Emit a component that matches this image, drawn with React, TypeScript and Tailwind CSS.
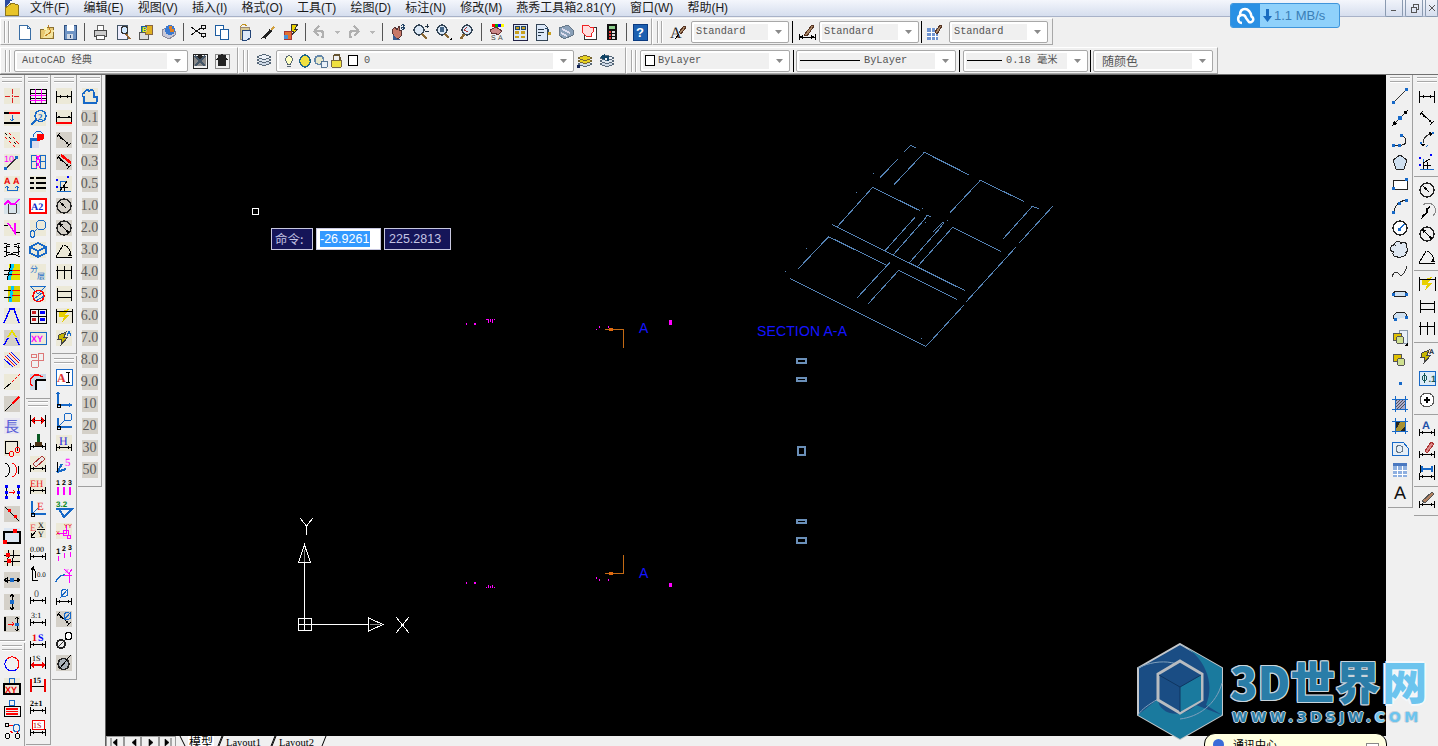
import React from 'react';

type Txt = { x: number; y: number; s: number; c: string; t: string; b?: boolean; f?: string };
type It = string | Txt;
const T = (x: number, y: number, s: number, c: string, t: string, b = false, f = 'Liberation Sans'): Txt => ({ x, y, s, c, t, b, f });
const R = '#f00', B = '#00f', M = '#f0f', K = '#000', U = '#1769c8', SE = 'Liberation Serif';
const D = ['#000|M.5 3V15M15.5 3V15M.5 8.5H15.5', '*#000|M1 8.5L5 7V10ZM15 8.5L11 7V10Z'];
const DL = ['#000|M.5 9V16M15.5 9V16M.5 12.5H15.5', '*#000|M1 12.5L4 11V14ZM15 12.5L12 11V14Z'];
const AL = ['#000|M4 1L1 5M15 11L11 15M2.5 3L13 13', '*#000|M2.5 3L6 5L4.5 6.5ZM13 13L9.5 11L11 9.5Z'];

function Ic({ d, size = 16 }: { d: It[]; size?: number }) {
  return (
    <svg width={size} height={size} viewBox="0 0 16 16" shapeRendering="crispEdges" className="overflow-visible shrink-0">
      {d.map((it, i) => {
        if (typeof it !== 'string')
          return <text key={i} x={it.x} y={it.y} fontSize={it.s} fill={it.c} fontWeight={it.b ? 700 : 400} fontFamily={it.f} textRendering="geometricPrecision">{it.t}</text>;
        const [c, p, w] = it.split('|');
        return c[0] === '*'
          ? <path key={i} d={p} fill={c.slice(1)} />
          : <path key={i} d={p} fill="none" stroke={c} strokeWidth={w || 1} />;
      })}
    </svg>
  );
}

const tile = (c: string): string => `*${c}|M0 0H16V16H0Z`;
const BG = tile('#ece9d8'), GR = tile('#d4d0c8');

const col1: It[][] = [
  [BG, '#d22|M8 1V6M8 7V9M8 10V15M1 8H6M10 8H15'],
  [BG, '#000|M0 2.5H16M0 12.5H16|2', '#f00|M5 2.5H16|2', `${U}|M8 5V11M6 9L8 11L10 9`],
  [BG, '#000|M1 1L3 3M5 5L7 7M10 10L12 12', '#f00|M5 1L7 3M9 5L11 7M12 9L15 12M1 5L3 7M5 9L7 11M9 13L11 15'],
  [BG, T(0, 8, 9, M, '10'), '#333|M2 15L12 4|1.5', `*${U}|M0 13H3V16H0ZM11 2H14V5H11Z`],
  [BG, T(0, 8, 9, '#e00', 'A', true), T(9, 8, 9, '#e00', 'A', true), `${U}|M3 10V14H13V10M1 12L3 10L5 12M11 12L13 10L15 12`],
  [tile('#d7e3ea'), '#444|M4 6V15M12 6V15M4 15H12', `${M}|M0 7L4 3L7 6L11 6L15 1|1.5`],
  [BG, '#000|M0 5H4M12 12H16', `${M}|M4 3L11 13V3|1.5`],
  ['#000|M0 1C6 4 10 4 16 1M0 6C6 3 10 3 16 6M0 15C6 11 10 11 16 15M0 9.5C6 12 10 12 16 9.5M2 3V13M14 3V13'],
  [tile('#e6e000'), '*#eee|M0 0H5V16H0Z', '#00c8ff|M9 0L5 16|3', '#000|M0 6H8M0 10H8M7 0L3 16', `${R}|M8 6H16M8 10H16`],
  [tile('#d8d000'), '*#eee|M0 0H4V16H0Z', '#00c8ff|M9 0L6 16|3', '#000|M0 4H7M0 11H7', `${R}|M8 4H16M8 9H16`],
  [BG, `${B}|M0 15L6 1L10 1L15 15|1.5`],
  [tile('#d4d0c8'), `${B}|M0 15L4 8M12 8L15 15|1.5`, '#e8e000|M4 7L8 1L12 7|1.5'],
  [BG, `${B}|M0 7L9 15M3 3L13 13M7 0L16 9`, `${R}|M1 4L11 14M5 1L15 11`],
  [BG, '#000|M0 15L7 9', '#f00|M8 8L10 6M11 5L13 3M14 2L16 0'],
  [GR, '#000|M1 15L8 8', `${R}|M8 8L15 1|1.5`],
  [tile('#e8e6f0'), T(0, 14, 15, '#5a5fd8', '長', false, 'Noto Sans CJK TC')],
  [BG, '#000|M1 1H13V11M1 1V13H5', `${R}|M5 14A2.5 2.5 0 1 0 10 14A2.5 2.5 0 1 0 5 14ZM11 10A2.5 2.5 0 1 0 16 10A2.5 2.5 0 1 0 11 10Z`],
  ['#000|M1 1C7 3 7 13 1 15', `${R}|M8 1C14 3 14 13 8 15`, '#000|M14 4V12'],
  ['#000|M2 1V15M14 1V15', `*${B}|M1 1H4V4H1ZM1 7H4V10H1ZM1 12H4V15H1ZM13 1H16V4H13ZM13 7H16V10H13ZM13 12H16V15H13Z`, `${R}|M5 8H11M9 6L11 8L9 10`],
  [GR, '#000|M1 1L15 15', `*${R}|M4 3H7V6H4ZM10 9H13V12H10Z`],
  [tile('#dce6f2'), '#000|M0 4H16V15H0Z|1.5', `*${R}|M9 1H13V5H9ZM-1 12H3V16H-1Z`],
  [BG, '#000|M0 5H16M0 11H16M5 0L3 16M10 0L8 16', `*${R}|M2 3H6V7H2ZM3 9H7V13H3Z`],
  [GR, '#000|M0 8H16M0 8L3 6V10ZM16 8L13 6V10Z', `*${U}|M6 6H10V10H6Z`],
  [GR, '#000|M8 0V16M6 3L8 0L10 3M6 13L8 16L10 13', `*${U}|M6 6H10V10H6Z`],
  [GR, '#000|M1 1V15|2', '#000|M13 1V15M11 3L13 1L15 3M11 13L13 15L15 13', `${R}|M4 8H10M8 6L10 8L8 10`, `*${U}|M11 7H15V10H11Z`],
];
const col1b: It[][] = [
  [`${B}|M3 3A7 7 0 0 0 3 13A7 7 0 0 0 13 13`, `${R}|M3 3A7 7 0 0 1 13 3A7 7 0 0 1 13 13|1`],
  [BG, `${U}|M5 3A3 3 0 1 1 11 3A3 3 0 1 1 5 3Z`, '#000|M0 6H16V16H0Z|1.5', T(1, 15, 9, '#e00', 'XY', true)],
  [`${U}|M5 3A3 3 0 1 1 11 3A3 3 0 1 1 5 3Z`, '#000|M0 6H16V16H0Z', `${R}|M2 9H14M2 11.5H14M2 14H14|1.5`],
  [`${U}|M9 6A3.5 3.5 0 1 1 16 6A3.5 3.5 0 1 1 9 6Z`, '#000|M1 3A2 2 0 1 1 5 3A2 2 0 1 1 1 3ZM1 14A2.5 2.5 0 1 1 6 14A2.5 2.5 0 1 1 1 14ZM11 14A2.5 2.5 0 1 1 16 14A2.5 2.5 0 1 1 11 14Z', `${R}|M5 3H9M6 9L9 11M13 9V11`],
];
const col2: It[][] = [
  ['#000|M0 1H16V15H0ZM0 5H16M0 10H16', `${M}|M5 1V15M11 1V15M0 7H16M0 12H16`],
  [BG, `${U}|M5 6A5.5 5.5 0 1 1 16 6A5.5 5.5 0 1 1 5 6Z|1.5`, `${U}|M6 10L1 15|2`, T(8, 10, 9, U, '2', true, SE)],
  [`${U}|M3 5A5.5 5.5 0 1 1 14 5`, `*${U}|M0 6H9V16H0Z`, `*#dde|M2 9H9V16H2Z`, `*${R}|M7 2H14V7L9 9H7Z`],
  [BG, `${U}|M1 1H6V7H1ZM1 7H6V14H1ZM10 1H15V7H10ZM10 7H15V14H10Z`, `${M}|M6 1L10 7M10 1L6 7M6 7L10 14M10 7L6 14`],
  [tile('#ece9d8'), '#000|M0 2H4M6 2H16M0 7H4M6 7H16M0 12H4M6 12H16|2.5'],
  [`*#fff|M0 1H16V15H0Z`, `${R}|M0 1H16V15H0Z|1.5`, T(1, 12, 10, '#0a28c8', 'A2', true, SE)],
  [BG, `${U}|M6 5A5 5 0 1 1 16 5A5 5 0 1 1 6 5ZM1 14A2 2 0 1 1 4 14A2 2 0 1 1 1 14ZM4 12L7 9`],
  [BG, `${U}|M0 5L8 1L16 5L8 9ZM0 5V11L8 15L16 11V5M8 9V15|1.5`],
  [BG, T(0, 8, 8, U, '分', false, 'Noto Sans CJK SC'), T(7, 15, 8, U, '层', false, 'Noto Sans CJK SC')],
  [BG, `${U}|M0 0H16L8 8Z`, `${R}|M3 10A5.5 5.5 0 1 1 14 10A5.5 5.5 0 1 1 3 10Z|1.5`, `${U}|M4 13L12 7M6 15L14 10`],
  ['#000|M0 1H16V15H0ZM8 1V15M0 8H16', `*#c22|M2 3H6V6H2ZM2 10H6V13H2Z`, `*${B}|M10 3H15V6H10ZM10 10H15V13H10Z`],
  [BG, `${U}|M0 2H16V14H0Z`, T(1, 12, 9, M, 'XY', true)],
  [`#d77|M8 1H13V8H8ZM1 12A4 4 0 1 1 9 12A4 4 0 1 1 1 12ZM1 2H6V5H1Z`],
  [tile('#c8d6e6'), '*#eef2f7|M6 6H16V16H6Z', '#000|M6 6H16M6 6V16|1.5', `${R}|M2 12A6 6 0 1 1 12 3|1.5`],
];
const col2b: It[][] = [
  [...D, '#e00|M2 8.5H14M2 8.5L5 5.5M2 8.5L5 11.5M14 8.5L11 5.5M14 8.5L11 11.5|1.5'],
  [...DL, '*#4a3014|M5 8H12V12H5Z', '*#0a5a24|M7 0H10V8H7Z'],
  [tile('#ece9d8'), ...DL, '*#e8e8e8|M3 8L12 0L15 3L6 11Z', '#a33|M3 8L12 0L15 3L6 11Z'],
  [BG, ...DL, T(0, 9, 10, '#e22', 'EH', false, SE)],
  [`${U}|M2 1V14H16|1.5`, '#000|M1 13H4V16H1Z', T(7, 10, 11, '#e22', 'E', false, SE), `${U}|M3 13L8 8`],
  [tile('#ece9d8'), T(0, 9, 10, '#e55', 'E', false, SE), T(8, 6, 8, K, 'X', false, SE), T(8, 15, 8, K, 'Y', false, SE), '#000|M7 7H15M6 9L1 15M1 11V15H5'],
  [...DL, T(0, 8, 8, K, '0.00', false, SE)],
  ['#000|M2 14L2 3M2 14L8 14|1', T(7, 11, 7, K, '0.0', false, SE), '*#000|M0 3L4 0L5 5Z', '#000|M2 2C6 4 6 8 6 12'],
  [...DL, T(4, 9, 10, '#555', '0', false, SE)],
  [...DL, T(1, 8, 8, K, '3:1', false, SE)],
  [...DL, T(2, 9, 10, '#e00', '1', true, SE), T(8, 9, 10, B, 'S', true, SE)],
  [T(2, 7, 8, K, '1S', false, SE), '#000|M.5 3V15M15.5 3V15', '#e00|M2 11H14|2', '*#e00|M0 11L4 8V14ZM16 11L12 8V14Z'],
  [T(3, 7, 8, K, '15', true, SE), '#000|M2 10H14', '#e00|M1 3V16M15 3V16|2'],
  [...DL, T(0, 8, 8, K, '2±1', true, SE)],
  [...DL, `*#fff|M2 0H14V9H2Z`, '#e00|M2 0H14V9H2Z', T(3, 8, 8, '#a00', '1S', false, SE)],
];
const col3: It[][] = [
  [BG, ...D],
  [BG, '#000|M.5 2V12M15.5 2V12M.5 7H15.5', '*#000|M1 7L4 5.5V8.5ZM15 7L12 5.5V8.5Z', `${R}|M0 13H16|2.5`],
  [GR, ...AL],
  [GR, ...AL, `${R}|M5 1L15 9|2.5`],
  [BG, `${U}|M1 15H15M4 15V5L11 5`, '#000|M4 15L11 5', `${B}|M1 5A1 1 0 1 1 1.1 5ZM12 2A1 1 0 1 1 12.1 2ZM1 12A1 1 0 1 1 1.1 12Z`, '#000|M8 15V8M4 11H12'],
  [GR, '#222|M1 8A7 7 0 1 1 15 8A7 7 0 1 1 1 8Z|1.5', '*#000|M4 4L8 6L6 8Z', '#000|M5 5L10 10'],
  [GR, '#222|M1 8A7 7 0 1 1 15 8A7 7 0 1 1 1 8Z|1.5', '#000|M3 3L13 13', '*#000|M3 3L7 4L4 7ZM13 13L9 12L12 9Z'],
  [tile('#ece9d8'), '#000|M0 15H16M0 15L7 3', '#000|M8 3C13 5 15 9 15 14', '*#000|M12 14H16L14 10Z'],
  [BG, '#000|M1 2V15M8 2V15M15 2V15M0 6H16'],
  [BG, '#000|M1 2V15M15 3V15M1 5H16M1 11H15'],
  [tile('#ece9d8'), '*#e8d000|M3 4L13 1L9 7L13 7L6 15L8 9L3 9Z', '#000|M0 1V15M16 1V15M0 3H16'],
  [BG, '*#c8b800|M3 5L10 2L8 7L12 7L5 15L6 9L2 9Z', '#444|M3 5L10 2L8 7L12 7L5 15L6 9L2 9Z', `${U}|M11 6L13 1L15 6`],
];
const col3b: It[][] = [
  [`*#fff|M0 0H16V16H0Z`, `${U}|M0 0H16V16H0Z`, T(1, 13, 12, '#d33', 'A', true, SE), '#000|M10 3H14M12 3V13M10 13H14'],
  [`${U}|M2 1V14H16|1.5`, '#000|M1 13H4V16H1Z', `*${U}|M0 3L2 0L4 3ZM13 12L16 14L13 16Z`],
  [`${U}|M2 5V14H16|1.5`, '#000|M1 13H4V16H1Z', `${U}|M8 4A4 4 0 1 1 16 4A4 4 0 1 1 8 4ZM3 13L9 7`],
  [tile('#ece9d8'), ...DL, T(3, 10, 12, '#2a2ad8', 'H', false, SE)],
  [`${U}|M1 15L6 7M1 15L10 12|2`, T(9, 9, 11, M, '5', false, SE), '#000|M1 5V15'],
  [T(0, 6, 7, K, '1', true), T(6, 6, 7, K, '2', true), T(12, 6, 7, K, '3', true), `${M}|M2 8V16M8 8V16M14 8V16|1.5`],
  [T(0, 6, 8, '#0a8a20', '3.2', true), `${U}|M0 8H16L8 16L3 8|2`],
  [tile('#ece9d8'), `${M}|M7 10A3 3 0 1 1 13 10A3 3 0 1 1 7 10ZM11 14A2 2 0 1 1 15 14A2 2 0 1 1 11 14ZM10 2V10H1`, T(8, 5, 6, '#e00', 'YY'), T(0, 12, 6, '#e00', 'X')],
  [T(0, 9, 8, K, '1', true), T(6, 6, 7, K, '2', true), T(12, 5, 7, K, '3', true), `${M}|M2 11V16M8 8V13M14 7V12`],
  [`${U}|M0 15C2 9 5 8 9 8|1.5`, `${M}|M8 2L13 7L16 2M13 7V10M8 8H16M13 10V16`, T(9, 6, 6, M, 'X')],
  [...DL, `${U}|M5 4A3.5 3.5 0 1 1 12 4A3.5 3.5 0 1 1 5 4ZM4 9L12 0`],
  [GR, ...AL, `${U}|M8 5A3.5 3.5 0 1 1 15 5A3.5 3.5 0 1 1 8 5ZM8 9L15 1`],
  ['#222|M1 11A4 4 0 1 1 9 11A4 4 0 1 1 1 11Z|2', '#333|M2 14L8 8M9 7L11 6', '*#fff|M9.5 3A3 3 0 1 1 15.5 3A3 3 0 1 1 9.5 3Z', '#000|M9 3A3.5 3.5 0 1 1 16 3A3.5 3.5 0 1 1 9 3Z'],
  [GR, '*#a8b0b8|M2 9A5.5 5.5 0 1 1 13 9A5.5 5.5 0 1 1 2 9Z', '#222|M2 9A5.5 5.5 0 1 1 13 9A5.5 5.5 0 1 1 2 9Z|1.5', '#000|M4 13L11 5M10 5L15 0'],
];
const col4Vals = ['0.1', '0.2', '0.3', '0.5', '1.0', '2.0', '3.0', '4.0', '5.0', '6.0', '7.0', '8.0', '9.0', '10', '20', '30', '50'];

const CLOUD = 'M3 3A3 3 0 0 1 9 1.5A3 3 0 0 1 14 5A3 3 0 0 1 14 10.500A3 3 0 0 1 10 14A3 3 0 0 1 5 14.500A3 3 0 0 1 1.500 10A3 3 0 0 1 3 3Z';
const rightA: It[][] = [
  ['#333|M1 15L14 2', `*${U}|M0 13H3V16H0ZM13 0H16V3H13Z`],
  ['#222|M1 15L15 1', '*#000|M0 16L2 11L5 14ZM16 0L14 5L11 2Z', `*${U}|M6 6H10V10H6Z`],
  ['#222|M2 13H10C15 13 15 5 10 4', `*${U}|M0 12H3V15H0ZM6 12H9V15H6ZM8 2H11V5H8Z`],
  ['*#cfe0f0|M8 1L15 6L12 15H4L1 6Z', '#222|M8 1L15 6L12 15H4L1 6Z'],
  ['*#fff|M1 4H15V13H1Z', '#222|M1 4H15V13H1Z', `*${U}|M0 11H3V14H0ZM13 2H16V5H13Z`],
  ['#222|M2 15C2 8 7 3 14 2', `*${U}|M0 13H3V16H0ZM6 4H9V7H6ZM13 1H16V4H13Z`],
  ['*#fff|M1 8A7 7 0 1 1 15 8A7 7 0 1 1 1 8Z', '#222|M1 8A7 7 0 1 1 15 8A7 7 0 1 1 1 8Z|1.5', `${U}|M8 9L12 4|1.5`, `*${U}|M6 8H9V11H6Z`],
  [`*#dfe8f2|${CLOUD}`, `#222|${CLOUD}`],
  ['#333|M0 13C2 7 5 7 7 10C9 13 12 11 15 2'],
  ['*#cfe0f0|M1 8C1 4 15 4 15 8C15 12 1 12 1 8Z', '#222|M1 8C1 4 15 4 15 8C15 12 1 12 1 8Z', `*${U}|M0 7H3V10H0ZM13 7H16V10H13Z`],
  ['*#cfe0f0|M3 12C0 9 2 4 8 4C14 4 16 7 14 9', '#222|M3 12C0 9 2 4 8 4C14 4 16 7 14 9', `*${U}|M2 10H5V13H2ZM13 8H16V11H13Z`],
  ['*#e8f0f8|M7 0H15V13H7Z', '#89a|M7 0H15V13H7Z', '*#e0c000|M1 3H9V10H1Z', '#555|M1 3H9V10H1Z', '*#cfe090|M4 10A4 4 0 1 1 12 10A4 4 0 1 1 4 10Z', '#555|M4 10A4 4 0 1 1 12 10A4 4 0 1 1 4 10Z', '*#000|M16 12V16H12Z'],
  ['*#e0c000|M1 2H9V9H1Z', '#555|M1 2H9V9H1Z', '*#cfe090|M5 10A4 4 0 1 1 13 10A4 4 0 1 1 5 10Z', '#555|M5 10A4 4 0 1 1 13 10A4 4 0 1 1 5 10Z'],
  [`*${U}|M7 8H10V11H7Z`],
  [`*#aac|M3 3H13V13H3Z`, '#555|M3 6L6 3M3 9L9 3M3 12L12 3M5 13L13 5M8 13L13 8', `${U}|M3 0V16M13 0V16M0 3H16M0 13H16`],
  ['*#222|M3 3H13V13H3Z', '*#a89030|M9 3H13V8L8 13H3Z', `${U}|M3 0V16M13 0V16M0 3H16M0 13H16`],
  ['*#e6eef6|M0 2H11L16 8V15H0Z', `${U}|M0 2H11L16 8V15H0Z`, '#678|M4 9A3.5 3.5 0 1 1 11 9A3.5 3.5 0 1 1 4 9Z'],
  ['*#8fb0e0|M1 1H15V15H1Z', '*#4a78c0|M1 1H15V4H1Z', '#fff|M1 8H15M1 12H15M5 4V15M10 4V15'],
  [T(2, 15, 18, '#111', 'A')],
];
const rightB: (It[] | null)[] = [
  [...D], [...AL], ['#333|M4 11C4 6 8 2 14 1', '*#000|M2 12L6 12L4 15ZM14 1L10 0L11 4Z', `*${U}|M1 10H3V12H1ZM13 0H15V2H13Z`, `${U}|M7 15L9 13`],
  [`${U}|M1 15H15M4 15V5`, '#000|M4 15V9L11 5M8 15V8M4 11H12', `${B}|M1 5A1 1 0 1 1 1.1 5ZM12 2A1 1 0 1 1 12.1 2ZM1 12A1 1 0 1 1 1.1 12Z`],
  null,
  ['#222|M1 8A7 7 0 1 1 15 8A7 7 0 1 1 1 8Z|1.5', '*#000|M4 4L8 6L6 8Z', '#000|M5 5L10 10'],
  ['#888|M4 1A7 7 0 0 1 14 12', '#000|M4 13L8 8L8 5L11 3|1.5', '*#000|M2 15L6 12L4 10Z'],
  ['#222|M1 8A7 7 0 1 1 15 8A7 7 0 1 1 1 8Z|1.5', '#000|M3 3L13 13', '*#000|M3 3L7 4L4 7ZM13 13L9 12L12 9Z'],
  ['#000|M0 15H16M0 15L7 3M8 3C13 5 15 9 15 14', '*#000|M12 14H16L14 10Z'],
  null,
  ['*#e8d000|M3 4L13 1L9 7L13 7L6 15L8 9L3 9Z', '#000|M0 1V15M16 1V15M0 3H16'],
  ['#000|M1 2V15M15 3V15M1 5H16M1 11H15'],
  ['#000|M1 2V15M8 2V15M15 2V15M0 6H16'],
  null,
  ['*#c8b800|M3 5L10 2L8 7L12 7L5 15L6 9L2 9Z', '#444|M3 5L10 2L8 7L12 7L5 15L6 9L2 9Z', T(10, 6, 7, '#123', 'A', true)],
  [`*#dcecf8|M0 1H16V15H0Z`, `${U}|M0 1H16V15H0Z`, '#155|M3 8A2.5 2.5 0 1 1 8 8A2.5 2.5 0 1 1 3 8ZM5.5 3V13', T(9.5, 12, 9, '#155', '.1', true)],
  ['*#fff|M1 8A7 7 0 1 1 15 8A7 7 0 1 1 1 8Z', '#555|M1 8A7 7 0 1 1 15 8A7 7 0 1 1 1 8Z', '#000|M5 8H11M8 5V11|1.5'],
  null,
  [...DL, T(3, 9, 11, '#1c4fa8', 'A', true)],
  [...DL, '*#d88|M6 9L12 0L15 2L8 11Z', '#a33|M6 9L12 0L15 2L8 11Z'],
  [...DL, '#000|M1 1V9M15 1V9', `${U}|M3 5H13M3 2V8M13 2V8|1.5`],
  null,
  [...DL, '*#b08060|M3 9L13 0L15 2L6 11Z', '#555|M3 9L13 0L15 2L6 11Z'],
];

const HGrip = () => (
  <div className="w-full flex flex-col items-center gap-[2px] pt-[2px] pb-[3px] h-[10px] shrink-0">
    <div className="w-[20px] h-[2px] border-t border-b border-t-[#a8a8a8] border-b-white" />
    <div className="w-[20px] h-[2px] border-t border-b border-t-[#a8a8a8] border-b-white" />
  </div>
);
const VGrip = ({ w = 'w-[13px]' }: { w?: string }) => (
  <div className={`${w} h-full shrink-0 flex items-center justify-center gap-[2px]`}>
    <div className="w-[2px] h-[22px] border-l border-r border-l-[#a8a8a8] border-r-white" />
    <div className="w-[2px] h-[22px] border-l border-r border-l-[#a8a8a8] border-r-white" />
  </div>
);
const SideBtn = ({ d }: { d: It[] }) => <div className="h-[22px] w-full flex items-center justify-center"><Ic d={d} /></div>;
const SideTB = ({ items, pb = 'pb-[5px]' }: { items: It[][]; pb?: string }) => (
  <div className={`w-[25px] flex flex-col border-r border-b border-r-[#a0a0a0] border-b-[#a0a0a0] ${pb}`}>
    <HGrip />
    {items.map((d, i) => <SideBtn key={i} d={d} />)}
  </div>
);

const Dn = () => <svg width="7" height="4" viewBox="0 0 7 4"><path d="M0 0H7L3.5 4Z" fill="#8a8a8a" /></svg>;
const Combo = ({ w, children, fw = 18 }: { w: string; children?: React.ReactNode; fw?: number }) => (
  <div className={`${w} h-[22px] shrink-0 flex items-stretch border border-[#a8a8a8] rounded-[2px] bg-white p-[2px]`}>
    <div className="flex-1 min-w-0 bg-[#f0f0f0] flex items-center whitespace-nowrap overflow-hidden text-[10.3px] text-[#555] font-['Liberation_Mono','Noto_Sans_CJK_SC',monospace]">{children}</div>
    <div style={{ width: fw }} className="bg-white flex items-center justify-center pl-[3px]"><Dn /></div>
  </div>
);
const Btn = ({ d, w = 'w-[23px]' }: { d: It[]; w?: string }) => <div className={`${w} h-full shrink-0 flex items-center justify-center`}><Ic d={d} /></div>;
const Sep = () => <div className="w-[7px] h-full flex items-center justify-center shrink-0"><div className="w-px h-[18px] bg-[#555]" /></div>;
const Bar = () => <div className="w-px h-[22px] bg-black shrink-0" />;
const Top = ({ children, cls }: { children: React.ReactNode; cls: string }) => (
  <div className={`${cls} flex items-center shrink-0 h-[27px] border border-t-white border-l-white border-r-[#a8a8a8] border-b-[#a8a8a8]`}>{children}</div>
);

const ic = {
  nw: ['*#fff|M3 1H11L14 4V15H3Z', '#3a6ea5|M3 1H11L14 4V15H3ZM11 1V4H14'],
  op: ['*#e8c870|M1 5H6L8 3H14V14H1Z', '#8a7030|M1 5H6L8 3H14V14H1Z', '*#f4e4a0|M4 14L7 6H15L13 14Z', '#c08020|M9 1L12 8L6 12', '*#fff8c0|M5 3H8V6H5Z'],
  sv: ['*#6f94c4|M2 1H14V15H2Z', '#30507f|M2 1H14V15H2Z', '*#fff|M4.5 1H11.5V7H4.5Z', '*#d0d8e4|M5 10H11V15H5Z', '#30507f|M8 11V14'],
  pr: ['*#fff|M5 1H11V6H5Z', '#666|M5 1H11V6H5Z', '*#ccc|M2 6H14V12H2Z', '#444|M2 6H14V12H2Z', '*#fff|M4 11H12V15H4Z', '#555|M4 11H12V15H4Z'],
  pv: ['*#eef|M2 1H12V15H2Z', '#456|M2 1H12V15H2Z', '*#cfe6ff|M6 6A3.5 3.5 0 1 1 13 6A3.5 3.5 0 1 1 6 6Z', '#333|M6 6A3.5 3.5 0 1 1 13 6A3.5 3.5 0 1 1 6 6Z', '#963|M11 10L15 15|2'],
  pb: ['*#ddd|M1 8H10V15H1Z', '#555|M1 8H10V15H1Z', '*#e0b020|M7 1H14V10H7Z', '#864|M7 1H14V10H7Z', '*#1a5aa8|M3 2H9V8H3Z', T(4, 8, 7, '#ff0', 'B', true)],
  gl: ['*#c8c8d8|M1 6L8 3L14 7V11L8 15L2 12Z', '#889|M1 6L8 3L14 7V11L8 15L2 12Z', '*#3a78d0|M4 6A5 5 0 1 1 14 6A5 5 0 1 1 4 6Z', '*#e08020|M8 2H11V5H13V8H9Z'],
  ct: ['#111|M0 3L10 10M0 11L10 4', '#111|M10 11A2.5 2 0 1 1 15 11A2.5 2 0 1 1 10 11ZM10 3A2.5 2 0 1 1 15 3A2.5 2 0 1 1 10 3Z'],
  cp: ['*#fff|M1 1H9V11H1Z', '#1c5ca0|M1 1H9V11H1Z', '*#fff|M6 5H14V15H6Z', '#1c5ca0|M6 5H14V15H6Z'],
  ps: ['*#d8c890|M3 3H12V15H3Z', '#987|M3 3H12V15H3Z', '#c09020|M4 3C3 0 11 0 10 3', '*#dde8f8|M5 6H13V14L10 16H5Z', '#247|M5 6H13V14L10 16H5Z'],
  br: ['#222|M4 14L11 6|3', '*#d0a040|M10 5L13 2L15 3L12 7Z', '*#222|M1 15L4 11L6 13Z'],
  mt: ['*#e8d000|M9 0L15 0L12 5L15 5L9 11L11 7L8 7Z', '#333|M9 0L15 0L12 5L15 5L9 11L11 7L8 7Z', '*#e07030|M1 7H8V15H1Z', '#a33|M1 7H8V15H1Z', '*#4a90d8|M1 11H5V15H1Z'],
  un: ['#b0b0b0|M3 7L8 2M3 7L8 12M3 7H9C13 7 13 11 11 14|2.5'],
  re: ['#b0b0b0|M13 7L8 2M13 7L8 12M13 7H7C3 7 3 11 5 14|2.5'],
  dn: ['*#b8b8b8|M6 7H11L8.5 10Z'],
  pn: ['*#c87868|M2 6L5 3L7 6L9 2L10 7L12 6L11 12L8 15L4 13Z', '#533|M2 6L5 3L7 6L9 2L10 7L12 6L11 12L8 15L4 13Z', '*#3a5a90|M3 11L8 15H10L9 16H3Z', '#246|M13 0V6M11 3H15M11 2L13 0L15 2M11 4L13 6L15 4'],
  zm: ['*#dbe8f6|M1 6A5 5 0 1 1 11 6A5 5 0 1 1 1 6Z', '#345|M1 6A5 5 0 1 1 11 6A5 5 0 1 1 1 6Z|1.5', '#863|M9 10L14 15|2.5', '#234|M12 2H16M14 0V4M12 7H16'],
  zw: ['*#dbe8f6|M1 6A5 5 0 1 1 11 6A5 5 0 1 1 1 6Z', '#345|M1 6A5 5 0 1 1 11 6A5 5 0 1 1 1 6Z|1.5', '#863|M9 10L13 14|2.5', '*#468|M4 3H8V8H4Z', '*#000|M16 13V16H13Z'],
  zp: ['*#dbe8f6|M3 6A5 5 0 1 1 13 6A5 5 0 1 1 3 6Z', '#345|M3 6A5 5 0 1 1 13 6A5 5 0 1 1 3 6Z|1.5', '#863|M5 10L2 15|2.5', '#a33|M8 3L5 6L9 8'],
  ob: ['*#f00|M3 0H6V3H3Z', '*#0a0|M6 0H9V3H6Z', '*#00f|M9 0H12V3H9Z', '*#ff0|M12 0H15V3H12Z', '*#c88|M1 6L7 3L13 7L9 11L6 9L3 10Z', '#633|M1 6L7 3L13 7L9 11L6 9L3 10Z', T(2, 16, 7, '#333', 'S'), T(9, 16, 7, '#333', 'A')],
  dc: ['*#dce8f8|M1 0H15V16H1Z', '#224|M1 0H15V16H1Z', '*#c8a020|M3 2H7V5H3ZM9 2H13V5H9ZM3 7H7V10H3ZM9 7H13V10H9ZM3 12H7V14H3ZM9 12H13V14H9Z', '#246|M3 2H7V5H3ZM9 2H13V5H9Z'],
  tp: ['*#dce8f8|M1 0H9L12 3V16H1Z', '#345|M1 0H9L12 3V16H1Z', '#234|M3 5H9M3 8H9M3 11H6', '*#c8a020|M13 8H16V11H13Z', '#246|M10 4C14 4 14 7 14 8'],
  ss: ['*#8aa0b8|M1 4L10 1L15 6V11L6 15L1 11Z', '#678|M1 4L10 1L15 6V11L6 15L1 11Z', '#dde|M4 5L12 9M3 9L9 12|2'],
  mk: ['*#fff|M3 3H15V15H3Z', '#333|M3 3H15V15H3ZM5 15H15', '*#fdd|M1 1H7L9 3H12V8L10 10V12H5L2 9Z', '#e22|M1 1H7L9 3H12V8L10 10V12H5L2 9Z'],
  cl: ['*#111|M3 0H13V16H3Z', '*#8ccf8c|M5 2H11V5H5Z', '*#e33|M5 7H7V9H5ZM5 10H7V12H5ZM5 13H7V15H5Z', '*#ddd|M8 7H11V9H8ZM8 10H11V12H8ZM8 13H11V15H8Z'],
  hp: ['*#1c5fb0|M1 0H15V16H1Z', '#0a3a80|M1 0H15V16H1Z', T(4, 13, 13, '#fff', '?', true)],
  ts: [T(0, 14, 16, '#222', 'A', false, SE), '*#a86|M9 8L14 2L16 3L11 10Z', '#532|M9 8L14 2L16 3L11 10Z', '#000|M5 15L9 10'],
  ds: ['#000|M0 10V16M16 10V16M0 13H16', '*#000|M0 13L4 11V15ZM16 13L12 11V15Z', '*#a86|M5 11L13 1L15 2L8 12Z', '#532|M5 11L13 1L15 2L8 12Z'],
  tb: ['*#6f94d0|M0 4H11V16H0Z', '#fff|M0 8H11M0 12H11M4 4V16M8 4V16', '*#a86|M8 8L13 1L15 2L10 10Z', '#532|M8 8L13 1L15 2L10 10Z'],
  ws: ['*#888|M2 4H14V13H2Z', '#222|M1 1H15V15H1Z', '*#222|M5 5A3 3 0 1 1 11 5A3 3 0 1 1 5 5Z', '#456|M3 3L13 13M13 3L3 13|2'],
  lk: ['*#222|M4 2H12V13H4Z', '#888|M1 1H15V15H1Z', '*#222|M8 1L15 7H1Z'],
  ly: ['*#cdd8e6|M1 10L8 7L15 10L8 13Z', '#567|M1 10L8 7L15 10L8 13Z', '*#dde5ee|M1 7L8 4L15 7L8 10Z', '#567|M1 7L8 4L15 7L8 10Z', '*#eef2f8|M1 4L8 1L15 4L8 7Z', '#567|M1 4L8 1L15 4L8 7Z'],
  lc: ['*#cdd8e6|M1 11L8 8L15 11L8 14Z', '#567|M1 11L8 8L15 11L8 14Z', '*#e6d020|M1 8L8 5L15 8L8 11Z', '#763|M1 8L8 5L15 8L8 11Z', '*#e6d020|M1 5L8 2L15 5L8 8Z', '#763|M1 5L8 2L15 5L8 8Z', '*#125|M0 12H3V15H0Z'],
  lp: ['*#cdd8e6|M1 11L8 8L15 11L8 14Z', '#567|M1 11L8 8L15 11L8 14Z', '*#dde5ee|M1 8L8 5L15 8L8 11Z', '#567|M1 8L8 5L15 8L8 11Z', '*#eef2f8|M1 5L8 2L15 5L8 8Z', '#567|M1 5L8 2L15 5L8 8Z', '#146|M6 2L3 4L6 6M3 4H9V8|2'],
};

const Small = ({ d, w = 'w-[14px]' }: { d: It[]; w?: string }) => <div className={`${w} flex justify-center shrink-0`}><Ic d={d} size={14} /></div>;

function Menu() {
  const items = ['文件(F)', '编辑(E)', '视图(V)', '插入(I)', '格式(O)', '工具(T)', '绘图(D)', '标注(N)', '修改(M)', '燕秀工具箱2.81(Y)', '窗口(W)', '帮助(H)'];
  return (
    <div className="h-[17px] shrink-0 flex items-center bg-gradient-to-b from-[#f4f6fc] to-[#d6deee] border-b border-[#a8b2c8] relative">
      <div className="w-[30px] pl-[4px] shrink-0">
        <svg width="18" height="16" viewBox="0 0 18 16" shapeRendering="crispEdges"><path d="M1 8L8 3L14 5V15H1Z" fill="#e8c428" /><path d="M1 8L8 3L14 5V15H1Z" fill="none" stroke="#8a7420" /><path d="M1 0H9L1 7Z" fill="#2a4aa0" /><path d="M6 1H8V3H6Z" fill="#fff" /></svg>
      </div>
      <div className="flex gap-[14.2px] text-[12px] text-[#1a1a1a] leading-none font-['Liberation_Sans','Noto_Sans_CJK_SC',sans-serif] whitespace-nowrap">
        {items.map(t => <span key={t}>{t}</span>)}
      </div>
    </div>
  );
}

const WinBtn = ({ d, w }: { d: string; w: string }) => (
  <div className={`${w} h-[17px] bg-gradient-to-b from-[#f0f3fa] to-[#d6deee] border-l border-r border-b border-[#8a9ab0] flex items-center justify-center rounded-b-[2px]`}>
    <svg width="10" height="10" viewBox="0 0 10 10" shapeRendering="crispEdges"><path d={d} fill="none" stroke="#555" strokeWidth="1" /></svg>
  </div>
);

function Canvas() {
  const seg = ['M373 36L392 16L407 24', 'M300 113L353 58', 'M342 134L433 37L566 104', 'M510 218L601 121L733 185', 'M670 296L757 199L776 206', 'M717 310L818 199', 'M172 260L278 142L420 212', 'M155 253L555 452', 'M55 386L146 290L318 375', 'M30 415L438 619L552 495', 'M558 486L707 322', 'M232 473L330 367', 'M265 491L356 391L531 479', 'M315 332L405 232', 'M340 344L432 240L441 226L452 230', 'M390 366L475 270L492 248', 'M414 378L518 262L662 334', 'M460 275L490 246'];
  const dots = [[280, 98], [228, 156], [78, 323], [16, 394], [427, 205], [502, 241], [424, 595], [435, 246]];
  const mag = [[466, 323, 1, 2], [474, 323, 2, 2], [486, 319, 2, 1], [488, 319, 1, 4], [490, 319, 1, 3], [492, 319, 1, 4], [494, 319, 1, 1], [596, 329, 1, 1], [599, 326, 1, 2], [608, 326, 1, 2], [669, 320, 3, 5], [466, 582, 1, 2], [474, 582, 2, 2], [486, 587, 1, 1], [488, 585, 1, 3], [490, 586, 1, 2], [492, 585, 1, 3], [494, 587, 1, 1], [596, 577, 1, 2], [599, 579, 1, 2], [608, 579, 1, 2], [669, 583, 3, 4]];
  const boxes = [[796, 358, 11, 6], [796, 377, 11, 5], [797, 446, 9, 10], [796, 519, 11, 5], [796, 537, 11, 7]];
  return (
    <svg width="1280" height="661" viewBox="106 75 1280 661" className="absolute inset-0" shapeRendering="crispEdges">
      <g transform="translate(780 140) scale(.33333)" fill="none" stroke="#5482b4">
        {seg.map((d, i) => <path key={i} d={d} vectorEffect="non-scaling-stroke" strokeWidth="1" />)}
        {dots.map(([x, y], i) => <rect key={i} x={x} y={y} width="3" height="3" fill="#5482b4" stroke="none" />)}
      </g>
      {boxes.map(([x, y, w, h], i) => <rect key={i} x={x + 1} y={y + 1} width={w - 2} height={h - 2} fill="none" stroke="#6a8fb8" strokeWidth="2" />)}
      <g fill="#f0f">{mag.map(([x, y, w, h], i) => <rect key={i} x={x} y={y} width={w} height={h} />)}</g>
      <path d="M605 329.5H623.5V348M605 573.5H623.5V555" fill="none" stroke="#c46a14" />
      <rect x="609" y="328" width="4" height="3" fill="#e06a10" />
      <rect x="609" y="572" width="4" height="3" fill="#e06a10" />
      <text x="639" y="333" fontSize="14" fill="#1414ff" fontFamily="Liberation Sans">A</text>
      <text x="639" y="578" fontSize="14" fill="#1414ff" fontFamily="Liberation Sans">A</text>
      <text x="757" y="336" fontSize="14" fill="#1414ff" fontFamily="Liberation Sans" textLength="90" lengthAdjust="spacing">SECTION A-A</text>
      <g fill="none" stroke="#fff">
        <rect x="252.5" y="208.5" width="6" height="6" strokeWidth="1.4" />
        <path d="M304.5 618V562M298.5 562.500H310.5L304.5 545ZM312 624.500H368M368.500 618V631L383 624.500ZM298.500 618.500H311.500V630.500H298.500ZM304.500 618.500V630.500M298.500 624.500H311.500" />
        <path d="M300 518L306.500 526L313 518M306.500 526V535M396 617L409 633M409 617L396 633" />
      </g>
      <path d="M304 550V562M370 624.500H381" stroke="#888" fill="none" />
    </svg>
  );
}

function Logo() {
  return (
    <div className="absolute left-[1136px] top-[643px] w-[302px] h-[100px]">
      <svg width="88" height="97" viewBox="0 0 88 97" className="absolute left-0 top-0">
        <path d="M44 1L86 25V72L44 96L2 72V25Z" fill="#1a4d84" stroke="#c4c8cc" strokeWidth="2" />
        <path d="M44 1L86 25V72L70 62C80 40 68 12 44 1Z" fill="#1a7a9e" />
        <path d="M2 72L44 96L86 72L60 62C44 78 22 70 22 56Z" fill="#1a7a9e" />
        <path d="M2 25C24 14 50 18 60 36M86 40C80 62 62 74 44 76M22 56C12 62 6 66 2 72" fill="none" stroke="#7fa0bc" strokeWidth="1" />
        <path d="M44 18L66 31V57L44 70L22 57V31Z" fill="#1a4d84" stroke="#b8bcc0" strokeWidth="3" />
        <path d="M44 44L65 32V57L44 69Z" fill="#1a7a9e" />
        <path d="M44 44L23 32M44 44V69M44 44L65 32" stroke="#0f3560" strokeWidth="1" fill="none" />
      </svg>
      <div className="absolute left-[94px] top-[15px] h-[46px] flex items-center whitespace-nowrap text-[45px] leading-[46px] font-black font-['Noto_Sans_CJK_SC',sans-serif] [text-shadow:-1px_0_#c8d4dc,1px_0_#c8d4dc,0_-1px_#c8d4dc,0_1px_#c8d4dc,-1px_-1px_#c8d4dc,1px_1px_#c8d4dc,1px_-1px_#c8d4dc,-1px_1px_#c8d4dc]">
        <span className="text-[#2a7da8]">3D世界</span><span className="text-[#6cc4ee] [text-shadow:-2px_0_#f4f8fb,2px_0_#f4f8fb,0_-2px_#f4f8fb,0_2px_#f4f8fb] ml-[2px]">网</span>
      </div>
      <div className="absolute left-[96px] top-[67px] whitespace-nowrap text-[14px] leading-[14px] font-bold tracking-[3.6px] font-['DejaVu_Sans',sans-serif] [text-shadow:-1px_0_#c8d4dc,1px_0_#c8d4dc,0_-1px_#c8d4dc,0_1px_#c8d4dc]">
        <span className="text-[#2a7da8]">WWW.3DSJW.</span><span className="text-[#6cc4ee]">COM</span>
      </div>
    </div>
  );
}

export default function App() {
  return (
    <div className="relative w-[1438px] h-[746px] overflow-hidden flex flex-col bg-[#f0f0f0] font-['Liberation_Sans','Noto_Sans_CJK_SC',sans-serif]">
      <Menu />
      <div className="h-[29px] shrink-0 flex items-start pt-[1px]">
        <Top cls="w-[652px]">
          <VGrip w="w-[11px]" />
          {[ic.nw, ic.op, ic.sv].map((d, i) => <Btn key={i} d={d} />)}<Sep />
          {[ic.pr, ic.pv, ic.pb, ic.gl].map((d, i) => <Btn key={i} d={d} />)}<Sep />
          {[ic.ct, ic.cp, ic.ps, ic.br, ic.mt].map((d, i) => <Btn key={i} d={d} />)}<Sep />
          <Btn d={ic.un} w="w-[20px]" /><Btn d={ic.dn} w="w-[15px]" /><Btn d={ic.re} w="w-[20px]" /><Btn d={ic.dn} w="w-[15px]" /><Sep />
          {[ic.pn, ic.zm, ic.zw, ic.zp].map((d, i) => <Btn key={i} d={d} />)}<Sep />
          {[ic.ob, ic.dc, ic.tp, ic.ss, ic.mk, ic.cl].map((d, i) => <Btn key={i} d={d} />)}<Sep />
          <Btn d={ic.hp} w="w-[20px]" />
        </Top>
        <Top cls="w-[401px]">
          <VGrip />
          <Btn d={ic.ts} />
          <Combo w="w-[98px] ml-[2px]"><span className="pl-[2px]">Standard</span></Combo>
          <div className="w-[7px] flex justify-center"><Bar /></div>
          <Btn d={ic.ds} w="w-[22px]" />
          <Combo w="w-[100px] ml-[1px]"><span className="pl-[2px]">Standard</span></Combo>
          <div className="w-[5px] flex justify-center"><Bar /></div>
          <Btn d={ic.tb} w="w-[22px]" />
          <Combo w="w-[99px] ml-[3px]"><span className="pl-[2px]">Standard</span></Combo>
        </Top>
      </div>
      <div className="h-[28px] shrink-0 flex items-start pt-[1px]">
        <Top cls="w-[238px]">
          <VGrip />
          <Combo w="w-[174px]"><span className="pl-[5px]">AutoCAD 经典</span></Combo>
          <Btn d={ic.ws} w="w-[23px]" /><Btn d={ic.lk} w="w-[22px]" />
        </Top>
        <Top cls="w-[388px]">
          <VGrip />
          <Btn d={ic.ly} w="w-[24px]" />
          <Combo w="w-[298px]">
            <div className="flex items-center gap-[2px] pl-[3px]">
              <Small d={['*#ffffc0|M4 6A4 4 0 1 1 12 6C12 9 10 10 10 12H6C6 10 4 9 4 6Z', '#456|M4 6A4 4 0 1 1 12 6C12 9 10 10 10 12H6C6 10 4 9 4 6ZM6 14H10']} />
              <Small d={['*#f0e040|M2 8A6 7 0 1 1 14 8A6 7 0 1 1 2 8Z', '#268|M2 8A6 7 0 1 1 14 8A6 7 0 1 1 2 8Z|1.5']} />
              <Small d={['*#e8e8c8|M1 7A5 5 0 1 1 11 7A5 5 0 1 1 1 7Z', '#68a|M1 7A5 5 0 1 1 11 7A5 5 0 1 1 1 7Z|2', '*#e8f0f8|M8 8H15V15H8Z', '#468|M8 8H15V15H8Z']} />
              <Small d={['*#f0e040|M2 7H13V15H2Z', '#653|M2 7H13V15H2Z', '#653|M4 7V3C4 0 11 0 11 3V7|2']} />
              <div className="w-[10px] h-[11px] bg-white border border-black shrink-0 ml-[2px]" />
              <span className="ml-[4px]">0</span>
            </div>
          </Combo>
          <Btn d={ic.lc} w="w-[22px]" /><Btn d={ic.lp} w="w-[22px]" />
        </Top>
        <Top cls="w-[592px]">
          <VGrip />
          <Combo w="w-[150px]"><div className="w-[10px] h-[11px] bg-white border border-black ml-[2px] mr-[3px] shrink-0" />ByLayer</Combo>
          <div className="w-[6px] flex justify-center"><Bar /></div>
          <Combo w="w-[160px]"><div className="w-[60px] h-px bg-black ml-[1px] mr-[4px] shrink-0" />ByLayer</Combo>
          <div className="w-[7px] flex justify-center"><Bar /></div>
          <Combo w="w-[125px]"><div className="w-[35px] h-px bg-black ml-[1px] mr-[4px] shrink-0" />0.18 毫米</Combo>
          <div className="w-[5px] flex justify-center"><Bar /></div>
          <Combo w="w-[120px]"><span className="pl-[6px] text-[12px] font-['Noto_Sans_CJK_SC',sans-serif]">随颜色</span></Combo>
        </Top>
      </div>
      <div className="h-px shrink-0 bg-[#707070]" />

      <div className="flex-1 min-h-0 flex">
        <div className="w-[105px] shrink-0 flex overflow-hidden">
          <div className="w-[26px] flex flex-col shrink-0">
            <SideTB items={col1} /><div className="h-[2px] shrink-0 border-t border-white" /><SideTB items={col1b} />
          </div>
          <div className="w-[26px] flex flex-col shrink-0">
            <SideTB items={col2} pb="pb-[5px]" /><SideTB items={col2b} />
          </div>
          <div className="w-[26px] flex flex-col shrink-0">
            <SideTB items={col3} pb="pb-[4px]" /><div className="h-[2px] shrink-0" /><SideTB items={col3b} />
          </div>
          <div className="w-[25px] shrink-0">
            <div className="w-[24px] flex flex-col border-r border-b border-r-[#a0a0a0] border-b-[#a0a0a0] pb-[5px]">
              <HGrip />
              <SideBtn d={[tile('#ece9d8'), `${U}|M2 15V9C0 9 0 5 2 5C3 2 6 1 7 3C9 1 12 2 12 5V9H15V13L14 15Z|1.5`]} />
              {col4Vals.map(v => (
                <div key={v} className="h-[22px] flex items-center justify-center">
                  <div className="w-[16px] h-[16px] bg-[#d4d0c8] flex items-center justify-center text-[14px] leading-none text-[#5a5a5a] font-['Liberation_Serif',serif]">{v}</div>
                </div>
              ))}
            </div>
          </div>
        </div>

        <div className="w-[1281px] shrink-0 flex flex-col border-l border-[#606060]">
          <div className="flex-1 relative bg-black">
            <Canvas />
            <div className="absolute left-[165px] top-[153px] flex gap-[3px] text-[12.500px] leading-none">
              <div className="w-[42px] h-[22px] bg-[#151558] border border-[#c8c8e0] text-[#c4c4e4] flex items-center pl-[3px] font-['Noto_Sans_CJK_SC',sans-serif] text-[12.500px]">命令:</div>
              <div className="w-[65px] h-[22px] bg-white border border-[#c8c8e0] flex items-center pl-[3px]"><span className="bg-[#3399ff] text-white h-[16px] flex items-center w-[50px] overflow-hidden">-26.9261</span></div>
              <div className="w-[67px] h-[22px] bg-[#151558] border border-[#c8c8e0] text-[#c4c4e4] flex items-center pl-[4px]">225.2813</div>
            </div>
          </div>
          <div className="h-[10px] shrink-0 bg-[#f0f0f0] flex overflow-hidden relative">
            <div className="flex">
              {['M2 1V10M8 2L4 5.500L8 9Z', 'M9 2L5 5.500L9 9Z', 'M5 2L9 5.500L5 9Z', 'M3 2L7 5.500L3 9ZM9 1V10'].map((d, i) => (
                <div key={i} className="w-[17.5px] h-[12px] bg-[#f0f0f0] border-l border-t border-r border-[#999] flex items-center justify-center">
                  <svg width="11" height="11" viewBox="0 0 11 11"><path d={d} fill="#000" stroke="#000" strokeWidth=".6" /></svg>
                </div>
              ))}
            </div>
            <div className="flex items-start text-[10.500px] leading-[13px] font-['Liberation_Serif','Noto_Sans_CJK_SC',serif] text-black ml-[2px]">
              <svg width="10" height="10" viewBox="0 0 10 10"><path d="M2 0L7 10" stroke="#000" fill="none" /></svg>
              <span className="bg-white text-[12px] px-[1px] w-[26px] font-['Noto_Sans_CJK_SC',sans-serif] leading-[11px]">模型</span>
              <svg width="12" height="10" viewBox="0 0 12 10"><path d="M5 10L9 0M4 10L8 0" stroke="#000" fill="none" /></svg>
              <span className="w-[41px]">Layout1</span>
              <svg width="12" height="10" viewBox="0 0 12 10"><path d="M5 10L9 0M4 10L8 0" stroke="#000" fill="none" /></svg>
              <span className="w-[41px]">Layout2</span>
              <svg width="10" height="10" viewBox="0 0 10 10"><path d="M2 10L6 0" stroke="#000" fill="none" /></svg>
            </div>
          </div>
        </div>

        <div className="flex-1 flex pl-[2px]">
          <div className="w-[25px] shrink-0 self-start flex flex-col border-r border-b border-r-[#a0a0a0] border-b-[#a0a0a0] pb-[4px]">
            <HGrip />
            {rightA.map((d, i) => <SideBtn key={i} d={d} />)}
          </div>
          <div className="w-[25px] ml-[1px] shrink-0 self-start flex flex-col border-b border-b-[#a0a0a0] pb-[4px]">
            <HGrip />
            {rightB.map((d, i) => d ? <SideBtn key={i} d={d} /> : <div key={i} className="h-[6px] flex items-center"><div className="w-full h-px bg-[#a0a0a0]" /></div>)}
          </div>
        </div>
      </div>

      <div className="absolute left-[1230px] top-[3px] w-[110px] h-[25px] rounded-[3px] bg-[#8fd1fb] border border-[#3f95db] flex overflow-hidden">
        <div className="w-[29px] h-full bg-[#2a90e4] flex items-center justify-center">
          <svg width="22" height="20" viewBox="0 0 22 20"><path d="M7 17A4 4 0 1 1 11 12L14 16A3 3 0 1 0 16.500 10.500C16 6 13 3 10 3C7 3 5 5 5 9" fill="none" stroke="#fff" strokeWidth="2.500" /></svg>
        </div>
        <div className="flex-1 flex items-center pl-[3px] gap-[2px] text-[13px] text-[#3a7fb8]">
          <svg width="9" height="13" viewBox="0 0 9 13"><path d="M3 0H6V7H9L4.500 13L0 7H3Z" fill="#1a6cc0" /></svg>
          <span>1.1 MB/s</span>
        </div>
      </div>

      <div className="absolute right-0 top-0 flex gap-[2px]">
        <WinBtn w="w-[18px]" d="M2 7H7" />
        <WinBtn w="w-[18px]" d="M2 4H7V9H2ZM4 4V1H9V6H7" />
        <WinBtn w="w-[13px]" d="M2 2L8 8M8 2L2 8" />
      </div>

      <Logo />

      <div className="absolute left-[1204px] top-[733px] w-[183px] h-[20px] rounded-t-[11px] bg-[#ffffe1] border border-black flex items-start pl-[8px] pt-[4px]">
        <div className="w-[11px] h-[11px] rounded-full bg-[#3a6cd8] mt-[1px]" />
        <span className="ml-[9px] text-[11px] leading-[12px] text-black font-['Noto_Sans_CJK_SC',sans-serif]">通讯中心</span>
        <div className="absolute right-[7px] top-[9px] w-[13px] h-[13px] border border-[#888] bg-white" />
      </div>
    </div>
  );
}
